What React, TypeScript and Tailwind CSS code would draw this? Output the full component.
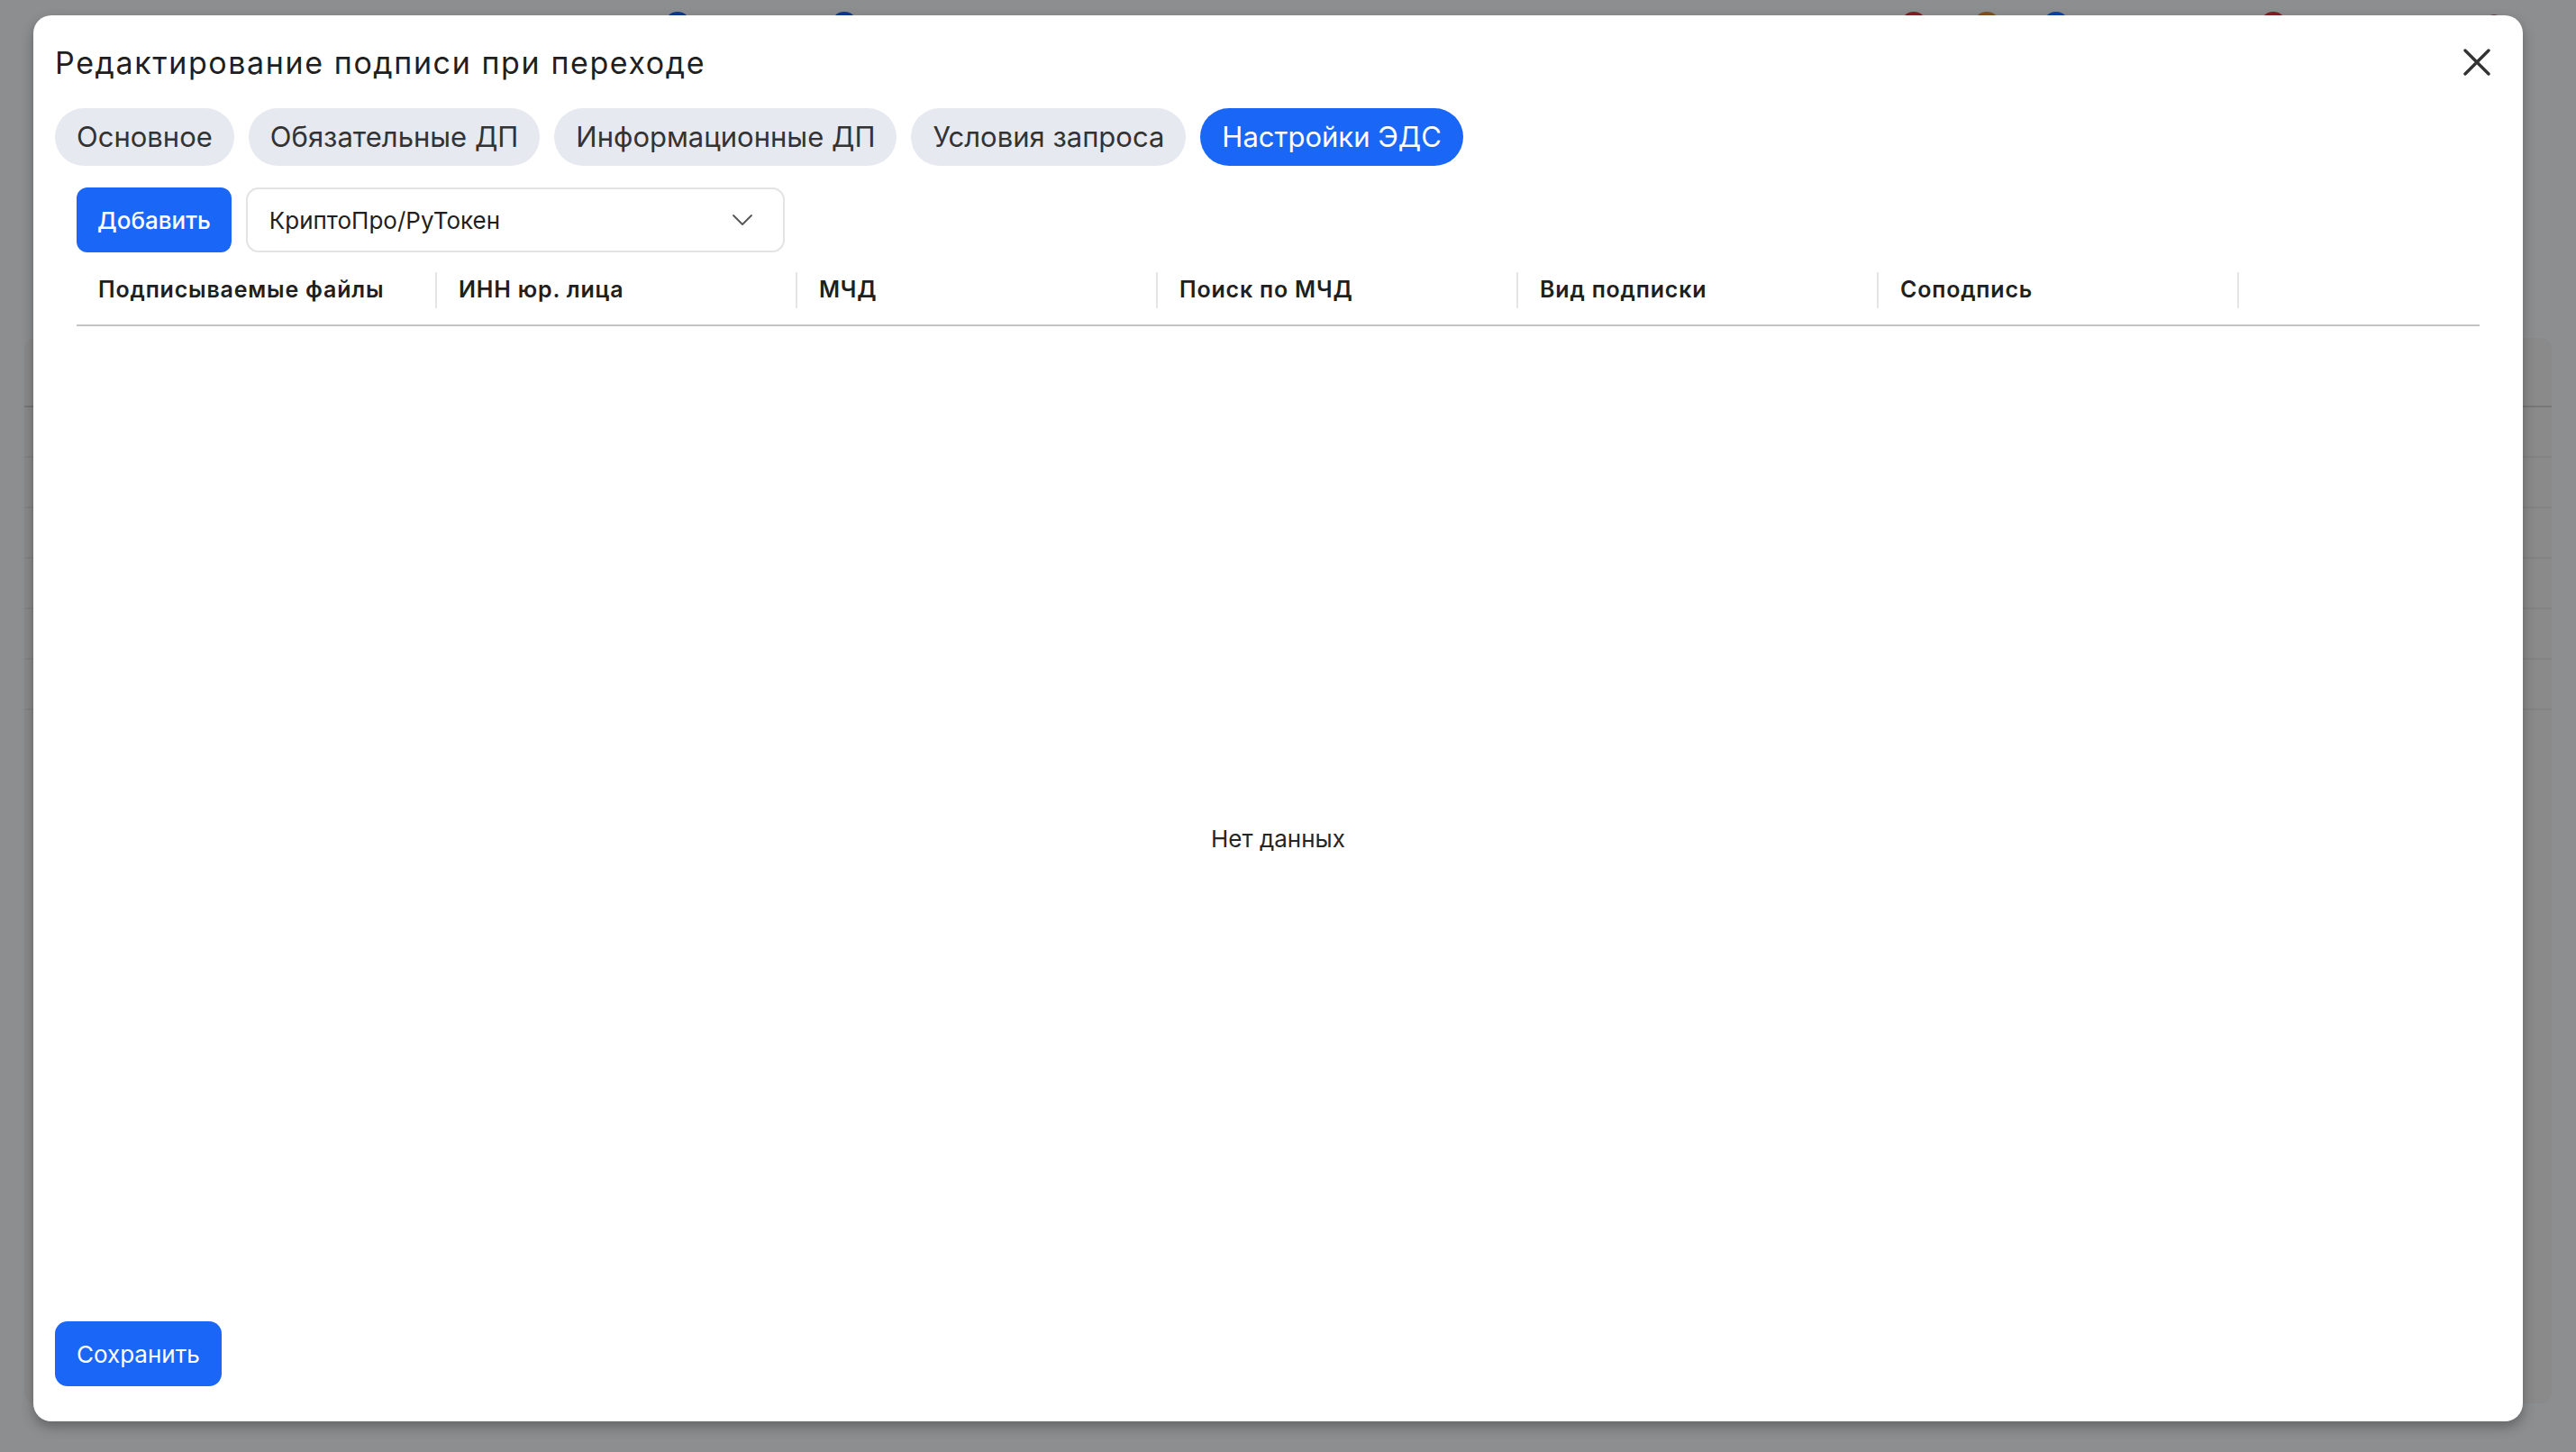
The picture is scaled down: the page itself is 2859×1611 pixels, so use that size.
import React from "react";
import { ChevronDown } from "lucide-react";

const tabs = [
  "Основное",
  "Обязательные ДП",
  "Информационные ДП",
  "Условия запроса",
  "Настройки ЭДС",
];

const columns = [
  "Подписываемые файлы",
  "ИНН юр. лица",
  "МЧД",
  "Поиск по МЧД",
  "Вид подписки",
  "Соподпись",
];

const App = () => {
  const activeTab = 4;

  return (
    <div className="relative h-[1611px] w-full overflow-hidden bg-[#8d8e90] font-['Inter','Noto_Sans',sans-serif]">
      {/* page behind the overlay */}
      <div className="flex h-full flex-col">
        <div className="flex h-[45px] items-start pt-[13px]">
          <div className="ml-[737px] h-[30px] w-[30px] rounded-full bg-[#10398c]" />
          <div className="ml-[155px] h-[30px] w-[30px] rounded-full bg-[#10398c]" />
          <div className="ml-[1157px] h-[30px] w-[30px] rounded-full bg-[#7e2222]" />
          <div className="ml-[51px] h-[30px] w-[30px] rounded-full bg-[#7f5222]" />
          <div className="ml-[47px] h-[30px] w-[30px] rounded-full bg-[#10439f]" />
          <div className="ml-[211px] h-[30px] w-[30px] rounded-full bg-[#7e2222]" />
          <div className="ml-[220px] mt-[3px] h-[20px] w-[20px] rounded-full bg-[#6a3a3a]" />
        </div>
        <div className="mx-[27px] mt-[330px] flex h-[1182px] flex-col rounded-[12px] bg-[#8a8a8a]">
          <div className="h-[77px] border-b-2 border-[#777777]" />
          {[0, 1, 2, 3, 4, 5].map((i) => (
            <div key={i} className="h-[56px] border-b-2 border-[#838383]" />
          ))}
        </div>
      </div>

      {/* modal */}
      <div className="absolute left-[37px] top-[17px] flex h-[1560px] w-[2763px] flex-col rounded-[20px] bg-white px-6 pb-[39px] pt-8 shadow-[0_6px_14px_rgba(0,0,0,0.3)]">
        {/* title */}
        <div className="flex h-10 items-center justify-between">
          <h2 className="mt-[2px] text-[34px] leading-10 font-normal tracking-[1.6px] text-[#1f1f1f]">
            Редактирование подписи при переходе
          </h2>
          <button className="mr-[7px] flex h-10 w-10 items-center justify-center text-[#333]">
            <svg width="30" height="30" viewBox="0 0 30 30">
              <path
                d="M2 2 L28 28 M28 2 L2 28"
                stroke="currentColor"
                strokeWidth="3.4"
                strokeLinecap="round"
              />
            </svg>
          </button>
        </div>

        {/* tabs */}
        <div className="mt-[31px] flex gap-4">
          {tabs.map((t, i) => (
            <div
              key={t}
              className={
                i === activeTab
                  ? "flex h-16 items-center rounded-full bg-[#1a66f6] px-6 text-[31px] text-white"
                  : "flex h-16 items-center rounded-full bg-[#e6e9ef] px-6 text-[31px] text-[#333]"
              }
            >
              {t}
            </div>
          ))}
        </div>

        {/* body */}
        <section className="flex flex-1 flex-col px-6">
          <div className="mt-6 flex h-[72px] gap-4">
            <button className="h-[72px] rounded-[12px] bg-[#1a66f6] px-[23px] text-[26px] font-medium text-white">
              Добавить
            </button>
            <div className="flex h-[72px] w-[598px] items-center justify-between rounded-[14px] border-2 border-[#e3e3e3] pl-6 pr-[25px] text-[26px] text-[#1f1f1f]">
              <span>КриптоПро/РуТокен</span>
              <ChevronDown size={40} strokeWidth={1.1} className="text-[#555]" />
            </div>
          </div>

          {/* table header */}
          <div className="mt-1 flex h-[78px] items-center border-b-2 border-[#c4c4c4]">
            {columns.map((c) => (
              <div
                key={c}
                className="flex w-[400px] items-center justify-between pl-6 text-[25px] font-semibold tracking-[0.8px] text-[#1f1f1f]"
              >
                <span>{c}</span>
                <div className="h-10 w-[2px] bg-[#e5e5e5]" />
              </div>
            ))}
            <div className="flex-1" />
          </div>

          {/* empty */}
          <div className="mt-[551px] text-center text-[26px] leading-9 text-[#262626]">
            Нет данных
          </div>
          <div className="flex-1" />
        </section>

        {/* footer */}
        <div>
          <button className="h-[72px] rounded-[14px] bg-[#1a66f6] px-6 text-[26px] text-white">
            Сохранить
          </button>
        </div>
      </div>
    </div>
  );
};

export default App;
